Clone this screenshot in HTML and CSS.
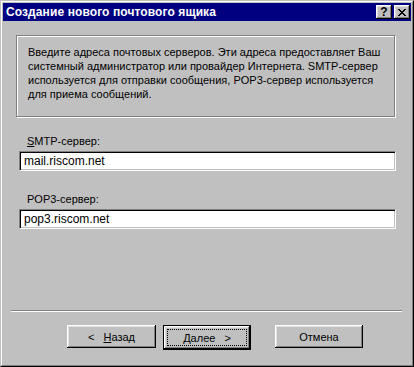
FILE: index.html
```html
<!DOCTYPE html>
<html lang="ru">
<head>
    <meta charset="UTF-8">
    <title>Создание нового почтового ящика</title>
    <link rel="stylesheet" href="styles.css">
</head>
<body>
    <div class="window">
        <div class="frame">
            <div class="titlebar">
                <span class="title">Создание нового почтового ящика</span>
                <div class="title-buttons">
                    <div class="tbtn">?</div>
                    <div class="tbtn">
                        <svg width="8" height="7" viewBox="0 0 8 7">
                            <path d="M0 0h2v1h1v1h2v-1h1v-1h2v1h-1v1h-1v1h-1v1h1v1h1v1h1v1h-2v-1h-1v-1h-2v1h-1v1h-2v-1h1v-1h1v-1h1v-1h-1v-1h-1v-1h-1z" fill="#000"/>
                        </svg>
                    </div>
                </div>
            </div>

            <div class="content">
                <div class="info">
                    Введите адреса почтовых серверов. Эти адреса предоставляет Ваш<br>
                    системный администратор или провайдер Интернета. SMTP-сервер<br>
                    используется для отправки сообщения, POP3-сервер используется<br>
                    для приема сообщений.
                </div>

                <div class="field first">
                    <label><u>S</u>MTP-сервер:</label>
                    <div class="input">mail.riscom.net</div>
                </div>
                <div class="field">
                    <label>POP3-сервер:</label>
                    <div class="input">pop3.riscom.net</div>
                </div>
            </div>

            <div class="footer">
                <div class="separator"></div>
                <div class="buttons">
                    <div class="btn"><span class="arrow">&lt;</span><u>Н</u>азад</div>
                    <div class="btn default"><div class="focus"><u>Д</u>алее<span class="arrow right">&gt;</span></div></div>
                    <div class="btn cancel">Отмена</div>
                </div>
            </div>
        </div>
    </div>
</body>
</html>
```

FILE: styles.css
```css
body {
    margin: 0;
    padding: 0;
    font-family: "Liberation Sans", Arial, sans-serif;
    font-size: 11px;
    color: #000;
    background: #c0c0c0;
}
.window {
    width: 414px;
    height: 367px;
    box-sizing: border-box;
    border: 1px solid;
    border-color: #c0c0c0 #000 #000 #c0c0c0;
    background: #c0c0c0;
}
.frame {
    height: 100%;
    box-sizing: border-box;
    border: 1px solid;
    border-color: #fff #808080 #808080 #fff;
    padding: 1px;
    display: flex;
    flex-direction: column;
}
.titlebar {
    height: 18px;
    background: #000080;
    display: flex;
    align-items: center;
    justify-content: space-between;
    padding: 0 1px 0 3px;
}
.title {
    color: #fff;
    font-weight: bold;
    font-size: 12px;
    letter-spacing: 0.1px;
}
.title-buttons {
    display: flex;
    gap: 2px;
}
.tbtn {
    width: 16px;
    height: 14px;
    background: #c0c0c0;
    box-shadow: inset -1px -1px #000, inset 1px 1px #fff, inset -2px -2px #808080, inset 2px 2px #dfdfdf;
    display: flex;
    align-items: center;
    justify-content: center;
    font-weight: bold;
    font-size: 12px;
    line-height: 14px;
}
.content {
    flex: 1;
    padding: 14px 14px 0 13px;
}
.info {
    height: 82px;
    box-sizing: border-box;
    border: 1px solid #808080;
    box-shadow: inset 1px 1px #fff, 1px 1px #fff;
    padding: 9px 8px 0 11px;
    line-height: 14px;
    width: 379px;
}
.field {
    margin-top: 21px;
    padding: 0 1px 0 3px;
}
.field.first {
    margin-top: 17px;
}
.field label {
    display: block;
    line-height: 14px;
    padding-left: 8px;
    margin-bottom: 3px;
}
.input {
    height: 20px;
    box-sizing: border-box;
    background: #fff;
    border: 1px solid;
    border-color: #808080 #fff #fff #808080;
    box-shadow: inset 1px 1px #000, inset -1px -1px #c0c0c0;
    padding: 0 4px;
    line-height: 18px;
    font-size: 12px;
}
.footer {
    padding-bottom: 14px;
}
.separator {
    margin: 0 9px 0 8px;
    border-top: 1px solid #808080;
    border-bottom: 1px solid #fff;
    height: 0;
}
.buttons {
    display: flex;
    margin-top: 13px;
    padding-left: 64px;
}
.btn {
    width: 89px;
    height: 23px;
    box-sizing: border-box;
    box-shadow: inset -1px -1px #000, inset 1px 1px #fff, inset -2px -2px #808080, inset 2px 2px #dfdfdf;
    display: flex;
    align-items: center;
    justify-content: center;
}
.btn .arrow {
    margin-right: 9px;
}
.btn .arrow.right {
    margin: 0 0 0 9px;
}
.btn.default {
    width: 88px;
    height: 25px;
    margin-left: 7px;
    border: 1px solid #000;
}
.btn.default .focus {
    width: 80px;
    height: 17px;
    box-sizing: border-box;
    border: 1px dotted #000;
    display: flex;
    align-items: center;
    justify-content: center;
}
.btn.cancel {
    width: 88px;
    margin-left: 24px;
}
```
